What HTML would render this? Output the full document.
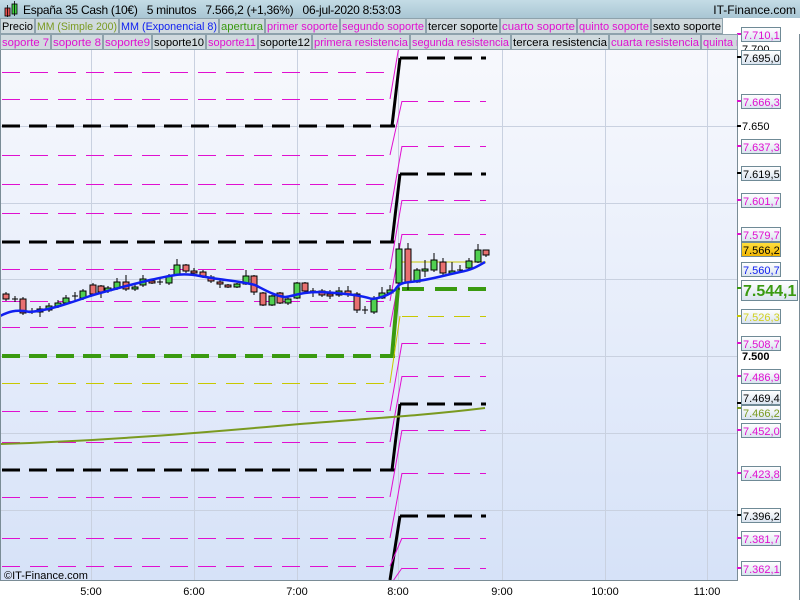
<!DOCTYPE html>
<html><head><meta charset="utf-8"><style>
html,body{margin:0;padding:0;width:800px;height:600px;overflow:hidden;background:#fff;font-family:"Liberation Sans",sans-serif}
</style></head><body>
<svg width="800" height="600" xmlns="http://www.w3.org/2000/svg" font-family="Liberation Sans, sans-serif">
<defs>
<linearGradient id="bg" x1="0" y1="0" x2="0" y2="1"><stop offset="0" stop-color="#f8f9fd"/><stop offset="1" stop-color="#d6e2f8"/></linearGradient>
<linearGradient id="hd" x1="0" y1="0" x2="0" y2="1"><stop offset="0" stop-color="#c4dce6"/><stop offset="1" stop-color="#a9c6d4"/></linearGradient>
<linearGradient id="lb" x1="0" y1="0" x2="0" y2="1"><stop offset="0" stop-color="#ffffff"/><stop offset="1" stop-color="#d9e3ef"/></linearGradient>
<linearGradient id="yl" x1="0" y1="0" x2="0" y2="1"><stop offset="0" stop-color="#ffe040"/><stop offset="1" stop-color="#f0b400"/></linearGradient>
</defs>
<rect x="0" y="0" width="800" height="600" fill="#fff"/>
<rect x="0" y="34" width="737" height="547" fill="url(#bg)"/>
<g stroke="#c9d1e0" stroke-width="1">
<line x1="0" y1="49.5" x2="737" y2="49.5"/><line x1="0" y1="126.5" x2="737" y2="126.5"/><line x1="0" y1="203.5" x2="737" y2="203.5"/><line x1="0" y1="279.5" x2="737" y2="279.5"/><line x1="0" y1="356.5" x2="737" y2="356.5"/><line x1="0" y1="433.5" x2="737" y2="433.5"/><line x1="0" y1="510.5" x2="737" y2="510.5"/>
<line x1="91.5" y1="34" x2="91.5" y2="581"/><line x1="194.5" y1="34" x2="194.5" y2="581"/><line x1="297.5" y1="34" x2="297.5" y2="581"/><line x1="398.5" y1="34" x2="398.5" y2="581"/><line x1="502.5" y1="34" x2="502.5" y2="581"/><line x1="605.5" y1="34" x2="605.5" y2="581"/><line x1="707.5" y1="34" x2="707.5" y2="581"/>
</g>
<g stroke="#e010d0" stroke-width="1" stroke-dasharray="18,10">
<line x1="2" y1="45.5" x2="390" y2="45.5"/><line x1="2" y1="72.5" x2="390" y2="72.5"/><line x1="2" y1="99.5" x2="390" y2="99.5"/>
<line x1="2" y1="155.5" x2="390" y2="155.5"/><line x1="2" y1="184.5" x2="390" y2="184.5"/><line x1="2" y1="213.5" x2="390" y2="213.5"/>
<line x1="2" y1="269.5" x2="390" y2="269.5"/><line x1="2" y1="301.5" x2="390" y2="301.5"/><line x1="2" y1="327.5" x2="390" y2="327.5"/>
<line x1="2" y1="411.5" x2="390" y2="411.5"/><line x1="2" y1="442.5" x2="390" y2="442.5"/>
<line x1="2" y1="497.5" x2="390" y2="497.5"/><line x1="2" y1="538.5" x2="390" y2="538.5"/><line x1="2" y1="566.5" x2="390" y2="566.5"/>
</g>
<line x1="2" y1="383.5" x2="390" y2="383.5" stroke="#c8c800" stroke-width="1" stroke-dasharray="18,10"/>
<g stroke="#000" stroke-width="3" stroke-dasharray="18,9">
<line x1="2" y1="126" x2="395" y2="126"/><line x1="2" y1="242" x2="395" y2="242"/><line x1="2" y1="470" x2="395" y2="470"/>
</g>
<line x1="2" y1="356" x2="395" y2="356" stroke="#3a9a10" stroke-width="4" stroke-dasharray="18,9"/>
<g stroke="#000" stroke-width="3" fill="none">
<path d="M392 126 L400 58"/><path d="M392 242 L400 174"/><path d="M392 470 L400 404"/><path d="M390 580 L400 516"/>
</g>
<g stroke="#e010d0" stroke-width="1" fill="none">
<path d="M390 45 L400 0"/><path d="M390 99 L400 40"/><path d="M390 155 L402 101"/><path d="M390 213 L402 146"/><path d="M390 269 L402 200"/><path d="M390 301 L402 234"/><path d="M390 327 L402 263"/><path d="M390 411 L402 343"/><path d="M390 442 L402 376"/><path d="M390 497 L402 430"/><path d="M390 538 L402 473"/><path d="M390 566 L402 538"/><path d="M393 581 L402 568"/>
</g>
<path d="M392 356 L398 288" stroke="#3a9a10" stroke-width="4"/>
<path d="M390 383 L400 316" stroke="#c8c800" stroke-width="1"/>
<g stroke="#e010d0" stroke-width="1" stroke-dasharray="16,10">
<line x1="402" y1="101.5" x2="486" y2="101.5"/><line x1="402" y1="146.5" x2="486" y2="146.5"/><line x1="402" y1="200.5" x2="486" y2="200.5"/><line x1="402" y1="234.5" x2="486" y2="234.5"/><line x1="402" y1="343.5" x2="486" y2="343.5"/><line x1="402" y1="376.5" x2="486" y2="376.5"/><line x1="402" y1="430.5" x2="486" y2="430.5"/><line x1="402" y1="473.5" x2="486" y2="473.5"/><line x1="402" y1="538.5" x2="486" y2="538.5"/><line x1="402" y1="568.5" x2="486" y2="568.5"/>
</g>
<line x1="402" y1="316.5" x2="486" y2="316.5" stroke="#c8c800" stroke-width="1" stroke-dasharray="16,10"/>
<g stroke="#000" stroke-width="3" stroke-dasharray="18,9">
<line x1="400" y1="58" x2="486" y2="58"/><line x1="400" y1="174" x2="486" y2="174"/><line x1="400" y1="404" x2="486" y2="404"/><line x1="400" y1="516" x2="486" y2="516"/>
</g>
<line x1="402" y1="289" x2="486" y2="289" stroke="#3a9a10" stroke-width="4" stroke-dasharray="22,11"/>
<line x1="398" y1="262" x2="486" y2="262" stroke="#c8c800" stroke-width="1"/>
<path d="M0 444 C100 441 200 433 300 424 C360 419 420 416 485 408" stroke="#7a9a20" stroke-width="2" fill="none"/>
<g stroke="#000" stroke-width="1">
<line x1="6" y1="292" x2="6" y2="301"/><rect x="3" y="294" width="6" height="5" fill="#e87070"/>
<line x1="15" y1="296" x2="15" y2="302"/><line x1="12" y1="299" x2="18" y2="299"/>
<line x1="23" y1="297" x2="23" y2="315"/><rect x="20" y="299" width="6" height="14" fill="#e87070"/>
<line x1="32" y1="308" x2="32" y2="314"/><line x1="29" y1="311" x2="35" y2="311"/>
<line x1="40" y1="306" x2="40" y2="317"/><rect x="37" y="309" width="6" height="3" fill="#50d050"/>
<line x1="49" y1="303" x2="49" y2="312"/><rect x="46" y="306" width="6" height="4" fill="#50d050"/>
<line x1="58" y1="300" x2="58" y2="308"/><rect x="55" y="303" width="6" height="3" fill="#50d050"/>
<line x1="66" y1="295" x2="66" y2="305"/><rect x="63" y="298" width="6" height="5" fill="#50d050"/>
<line x1="75" y1="292" x2="75" y2="300"/><line x1="72" y1="296" x2="78" y2="296"/>
<line x1="83" y1="289" x2="83" y2="300"/><rect x="80" y="291" width="6" height="7" fill="#50d050"/>
<line x1="93" y1="283" x2="93" y2="296"/><rect x="90" y="285" width="6" height="9" fill="#e87070"/>
<line x1="101" y1="285" x2="101" y2="298"/><rect x="98" y="286" width="6" height="6" fill="#e87070"/>
<line x1="108" y1="286" x2="108" y2="293"/><rect x="105" y="288" width="6" height="3" fill="#50d050"/>
<line x1="117" y1="278" x2="117" y2="290"/><rect x="114" y="282" width="6" height="6" fill="#50d050"/>
<line x1="126" y1="275" x2="126" y2="291"/><rect x="123" y="282" width="6" height="7" fill="#e87070"/>
<line x1="135" y1="285" x2="135" y2="291"/><rect x="132" y="287" width="6" height="2" fill="#50d050"/>
<line x1="143" y1="275" x2="143" y2="287"/><rect x="140" y="279" width="6" height="6" fill="#50d050"/>
<line x1="152" y1="279" x2="152" y2="284"/><rect x="149" y="281" width="6" height="2" fill="#e87070"/>
<line x1="160" y1="279" x2="160" y2="285"/><line x1="157" y1="282" x2="163" y2="282"/>
<line x1="169" y1="274" x2="169" y2="285"/><rect x="166" y="276" width="6" height="7" fill="#50d050"/>
<line x1="177" y1="259" x2="177" y2="276"/><rect x="174" y="265" width="6" height="10" fill="#50d050"/>
<line x1="186" y1="264" x2="186" y2="273"/><rect x="183" y="265" width="6" height="6" fill="#e87070"/>
<line x1="194" y1="268" x2="194" y2="274"/><rect x="191" y="271" width="6" height="2" fill="#e87070"/>
<line x1="203" y1="270" x2="203" y2="278"/><rect x="200" y="272" width="6" height="4" fill="#e87070"/>
<line x1="211" y1="275" x2="211" y2="283"/><rect x="208" y="277" width="6" height="4" fill="#e87070"/>
<line x1="220" y1="280" x2="220" y2="288"/><rect x="217" y="282" width="6" height="2" fill="#e87070"/>
<line x1="228" y1="284" x2="228" y2="288"/><rect x="225" y="285" width="6" height="2" fill="#e87070"/>
<line x1="237" y1="283" x2="237" y2="288"/><rect x="234" y="284" width="6" height="3" fill="#50d050"/>
<line x1="246" y1="270" x2="246" y2="285"/><rect x="243" y="276" width="6" height="8" fill="#50d050"/>
<line x1="254" y1="275" x2="254" y2="295"/><rect x="251" y="276" width="6" height="16" fill="#e87070"/>
<line x1="263" y1="292" x2="263" y2="306"/><rect x="260" y="293" width="6" height="12" fill="#e87070"/>
<line x1="272" y1="295" x2="272" y2="306"/><rect x="269" y="296" width="6" height="9" fill="#50d050"/>
<line x1="280" y1="292" x2="280" y2="304"/><rect x="277" y="293" width="6" height="10" fill="#e87070"/>
<line x1="288" y1="296" x2="288" y2="305"/><rect x="285" y="299" width="6" height="4" fill="#50d050"/>
<line x1="297" y1="282" x2="297" y2="299"/><rect x="294" y="283" width="6" height="15" fill="#50d050"/>
<line x1="305" y1="282" x2="305" y2="292"/><rect x="302" y="283" width="6" height="8" fill="#e87070"/>
<line x1="313" y1="288" x2="313" y2="297"/><line x1="310" y1="291" x2="316" y2="291"/>
<line x1="322" y1="289" x2="322" y2="297"/><rect x="319" y="291" width="6" height="4" fill="#e87070"/>
<line x1="330" y1="290" x2="330" y2="299"/><rect x="327" y="294" width="6" height="2" fill="#e87070"/>
<line x1="339" y1="287" x2="339" y2="297"/><rect x="336" y="291" width="6" height="4" fill="#50d050"/>
<line x1="348" y1="286" x2="348" y2="297"/><rect x="345" y="291" width="6" height="3" fill="#e87070"/>
<line x1="357" y1="292" x2="357" y2="313"/><rect x="354" y="294" width="6" height="16" fill="#e87070"/>
<line x1="365" y1="306" x2="365" y2="314"/><line x1="362" y1="310" x2="368" y2="310"/>
<line x1="374" y1="296" x2="374" y2="314"/><rect x="371" y="298" width="6" height="14" fill="#50d050"/>
<line x1="382" y1="287" x2="382" y2="299"/><rect x="379" y="293" width="6" height="5" fill="#50d050"/>
<line x1="390" y1="285" x2="390" y2="294"/><rect x="387" y="290" width="6" height="3" fill="#50d050"/>
<line x1="399" y1="243" x2="399" y2="290"/><rect x="396" y="249" width="6" height="34" fill="#50d050"/>
<line x1="408" y1="243" x2="408" y2="290"/><rect x="405" y="249" width="6" height="33" fill="#e87070"/>
<line x1="417" y1="268" x2="417" y2="283"/><rect x="414" y="270" width="6" height="12" fill="#50d050"/>
<line x1="425" y1="260" x2="425" y2="277"/><rect x="422" y="269" width="6" height="2" fill="#50d050"/>
<line x1="434" y1="253" x2="434" y2="272"/><rect x="431" y="260" width="6" height="10" fill="#50d050"/>
<line x1="443" y1="258" x2="443" y2="276"/><rect x="440" y="262" width="6" height="11" fill="#e87070"/>
<line x1="452" y1="262" x2="452" y2="274"/><rect x="449" y="271" width="6" height="2" fill="#50d050"/>
<line x1="460" y1="265" x2="460" y2="273"/><line x1="457" y1="270" x2="463" y2="270"/>
<line x1="469" y1="258" x2="469" y2="270"/><rect x="466" y="261" width="6" height="7" fill="#50d050"/>
<line x1="478" y1="244" x2="478" y2="263"/><rect x="475" y="250" width="6" height="12" fill="#50d050"/>
<line x1="486" y1="250" x2="486" y2="257"/><rect x="483" y="250" width="6" height="5" fill="#e87070"/>
</g>
<path d="M0 316 C8 312 15 309 30 312 C50 310 70 303 90 296 C110 290 130 285 150 280 C170 276 180 272 200 276 C220 280 240 281 255 285 C265 290 275 296 285 297 C295 296 300 292 320 292 C340 293 360 295 372 299 C382 298 390 294 395 290 C398 285 400 283 410 282 C430 280 445 275 460 272 C472 270 478 266 485 262" stroke="#1020f0" stroke-width="2.5" fill="none"/>
<rect x="737" y="34" width="63" height="566" fill="#fff"/>
<line x1="737.5" y1="34" x2="737.5" y2="581" stroke="#7a8c96" stroke-width="1"/>
<line x1="0" y1="580.5" x2="737" y2="580.5" stroke="#7a8c96" stroke-width="1"/>
<line x1="0.5" y1="34" x2="0.5" y2="581" stroke="#7a8c96"/>
<g font-size="11" fill="#000">
<text x="742" y="53">7.700</text><text x="742" y="130">7.650</text><text x="742" y="517">7.400</text>
</g>
<g stroke="#6f8a96" stroke-width="1" fill="url(#lb)" font-size="11">
<rect x="741.5" y="27.5" width="39" height="14"/><rect x="741.5" y="50.5" width="39" height="14"/><rect x="741.5" y="94.5" width="39" height="14"/><rect x="741.5" y="139.5" width="39" height="14"/><rect x="741.5" y="166.5" width="39" height="14"/><rect x="741.5" y="193.5" width="39" height="14"/><rect x="741.5" y="227.5" width="39" height="14"/><rect x="741.5" y="262.5" width="39" height="14"/><rect x="741.5" y="309.5" width="39" height="14"/><rect x="741.5" y="336.5" width="39" height="14"/><rect x="741.5" y="369.5" width="39" height="14"/><rect x="741.5" y="390.5" width="39" height="14"/><rect x="741.5" y="405.5" width="39" height="14"/><rect x="741.5" y="423.5" width="39" height="14"/><rect x="741.5" y="466.5" width="39" height="14"/><rect x="741.5" y="508.5" width="39" height="14"/><rect x="741.5" y="531.5" width="39" height="14"/><rect x="741.5" y="561.5" width="39" height="14"/>
<rect x="741.5" y="280.5" width="56" height="20"/>
<rect x="741.5" y="242.5" width="39" height="14" fill="url(#yl)"/>
</g>
<g font-size="11" stroke="none">
<text x="743" y="39" fill="#e010d0">7.710,1</text>
<text x="743" y="62" fill="#000">7.695,0</text>
<text x="743" y="106" fill="#e010d0">7.666,3</text>
<text x="743" y="151" fill="#e010d0">7.637,3</text>
<text x="743" y="178" fill="#000">7.619,5</text>
<text x="743" y="205" fill="#e010d0">7.601,7</text>
<text x="743" y="239" fill="#e010d0">7.579,7</text>
<text x="743" y="254" fill="#000">7.566,2</text>
<text x="743" y="274" fill="#1020f0">7.560,7</text>
<text x="743" y="296" fill="#3a9a10" font-size="16" font-weight="bold">7.544,1</text>
<text x="743" y="321" fill="#d0d020">7.526,3</text>
<text x="743" y="348" fill="#e010d0">7.508,7</text>
<text x="742" y="360" fill="#000" font-weight="bold">7.500</text>
<text x="743" y="381" fill="#e010d0">7.486,9</text>
<text x="743" y="402" fill="#000">7.469,4</text>
<text x="743" y="417" fill="#7a9a20">7.466,2</text>
<text x="743" y="435" fill="#e010d0">7.452,0</text>
<text x="743" y="478" fill="#e010d0">7.423,8</text>
<text x="743" y="520" fill="#000">7.396,2</text>
<text x="743" y="543" fill="#e010d0">7.381,7</text>
<text x="743" y="573" fill="#e010d0">7.362,1</text>
</g>
<g stroke-width="2">
<line x1="737" y1="34" x2="741" y2="34" stroke="#e010d0"/><line x1="737" y1="57" x2="741" y2="57" stroke="#000"/><line x1="737" y1="101" x2="741" y2="101" stroke="#e010d0"/><line x1="737" y1="126" x2="741" y2="126" stroke="#000"/><line x1="737" y1="146" x2="741" y2="146" stroke="#e010d0"/><line x1="737" y1="173" x2="741" y2="173" stroke="#000"/><line x1="737" y1="200" x2="741" y2="200" stroke="#e010d0"/><line x1="737" y1="234" x2="741" y2="234" stroke="#e010d0"/><line x1="737" y1="288" x2="741" y2="288" stroke="#3a9a10"/><line x1="737" y1="316" x2="741" y2="316" stroke="#c8c800"/><line x1="737" y1="343" x2="741" y2="343" stroke="#e010d0"/><line x1="737" y1="376" x2="741" y2="376" stroke="#e010d0"/><line x1="737" y1="403" x2="741" y2="403" stroke="#000"/><line x1="737" y1="408" x2="741" y2="408" stroke="#7a9a20"/><line x1="737" y1="430" x2="741" y2="430" stroke="#e010d0"/><line x1="737" y1="473" x2="741" y2="473" stroke="#e010d0"/><line x1="737" y1="515" x2="741" y2="515" stroke="#000"/><line x1="737" y1="538" x2="741" y2="538" stroke="#e010d0"/><line x1="737" y1="568" x2="741" y2="568" stroke="#e010d0"/>
</g>
<text x="4" y="579" font-size="11" fill="#000">©IT-Finance.com</text>
<g font-size="11" fill="#000" text-anchor="middle">
<text x="91" y="595">5:00</text><text x="194" y="595">6:00</text><text x="297" y="595">7:00</text><text x="398" y="595">8:00</text><text x="502" y="595">9:00</text><text x="605" y="595">10:00</text><text x="707" y="595">11:00</text>
</g>
<line x1="799.5" y1="34" x2="799.5" y2="600" stroke="#7a8c96"/>
<rect x="0" y="0" width="800" height="18" fill="url(#hd)"/>
<rect x="0" y="18" width="737" height="16" fill="#b0ccd8"/>
<rect x="5" y="8" width="5" height="8" fill="#e05050" stroke="#000" stroke-width="0.8"/><line x1="7.5" y1="5" x2="7.5" y2="17" stroke="#000" stroke-width="0.8"/>
<rect x="12" y="4" width="5" height="10" fill="#40d040" stroke="#000" stroke-width="0.8"/><line x1="14.5" y1="1" x2="14.5" y2="16" stroke="#000" stroke-width="0.8"/>
<text x="23" y="14" font-size="12" fill="#000" xml:space="preserve" textLength="378" lengthAdjust="spacing">España 35 Cash (10€)   5 minutos   7.566,2 (+1,36%)   06-jul-2020 8:53:03</text>
<text x="796" y="14" font-size="12" fill="#000" text-anchor="end">IT-Finance.com</text>
<g stroke="#8ea2ac" stroke-width="1" fill="#d0dade">
<rect x="0.5" y="18.5" width="34" height="15"/><rect x="35.5" y="18.5" width="83" height="15"/><rect x="119.5" y="18.5" width="99" height="15"/><rect x="219.5" y="18.5" width="45" height="15"/><rect x="265.5" y="18.5" width="74" height="15"/><rect x="340.5" y="18.5" width="85" height="15"/><rect x="426.5" y="18.5" width="73" height="15"/><rect x="500.5" y="18.5" width="76" height="15"/><rect x="577.5" y="18.5" width="73" height="15"/><rect x="651.5" y="18.5" width="71" height="15"/>
<rect x="0.5" y="34.5" width="50" height="15"/><rect x="51.5" y="34.5" width="51" height="15"/><rect x="103.5" y="34.5" width="48" height="15"/><rect x="152.5" y="34.5" width="53" height="15"/><rect x="206.5" y="34.5" width="51" height="15"/><rect x="258.5" y="34.5" width="53" height="15"/><rect x="312.5" y="34.5" width="97" height="15"/><rect x="410.5" y="34.5" width="100" height="15"/><rect x="511.5" y="34.5" width="97" height="15"/><rect x="609.5" y="34.5" width="91" height="15"/><rect x="701.5" y="34.5" width="36" height="15"/>
</g>
<rect x="723" y="18" width="14" height="16" fill="#fff"/>
<svg x="0" y="34" width="737" height="16"><text x="703" y="12" font-size="11" fill="#e010d0">quinta resistencia</text></svg>
<g font-size="11" lengthAdjust="spacingAndGlyphs">
<text x="2" y="30" fill="#000" textLength="31" lengthAdjust="spacingAndGlyphs">Precio</text><text x="37" y="30" fill="#7a9a20" textLength="80" lengthAdjust="spacingAndGlyphs">MM (Simple 200)</text><text x="121" y="30" fill="#1020f0" textLength="96" lengthAdjust="spacingAndGlyphs">MM (Exponencial 8)</text><text x="221" y="30" fill="#3a9a10" textLength="42" lengthAdjust="spacingAndGlyphs">apertura</text><text x="267" y="30" fill="#e010d0" textLength="71" lengthAdjust="spacingAndGlyphs">primer soporte</text><text x="342" y="30" fill="#e010d0" textLength="82" lengthAdjust="spacingAndGlyphs">segundo soporte</text><text x="428" y="30" fill="#000" textLength="70" lengthAdjust="spacingAndGlyphs">tercer soporte</text><text x="502" y="30" fill="#e010d0" textLength="73" lengthAdjust="spacingAndGlyphs">cuarto soporte</text><text x="579" y="30" fill="#e010d0" textLength="70" lengthAdjust="spacingAndGlyphs">quinto soporte</text><text x="653" y="30" fill="#000" textLength="68" lengthAdjust="spacingAndGlyphs">sexto soporte</text>
<text x="2" y="46" fill="#e010d0" textLength="47" lengthAdjust="spacingAndGlyphs">soporte 7</text><text x="53" y="46" fill="#e010d0" textLength="48" lengthAdjust="spacingAndGlyphs">soporte 8</text><text x="105" y="46" fill="#e010d0" textLength="45" lengthAdjust="spacingAndGlyphs">soporte9</text><text x="154" y="46" fill="#000" textLength="50" lengthAdjust="spacingAndGlyphs">soporte10</text><text x="208" y="46" fill="#e010d0" textLength="48" lengthAdjust="spacingAndGlyphs">soporte11</text><text x="260" y="46" fill="#000" textLength="50" lengthAdjust="spacingAndGlyphs">soporte12</text><text x="314" y="46" fill="#e010d0" textLength="94" lengthAdjust="spacingAndGlyphs">primera resistencia</text><text x="412" y="46" fill="#e010d0" textLength="97" lengthAdjust="spacingAndGlyphs">segunda resistencia</text><text x="513" y="46" fill="#000" textLength="94" lengthAdjust="spacingAndGlyphs">tercera resistencia</text><text x="611" y="46" fill="#e010d0" textLength="88" lengthAdjust="spacingAndGlyphs">cuarta resistencia</text>
</g>
</svg>
</body></html>
